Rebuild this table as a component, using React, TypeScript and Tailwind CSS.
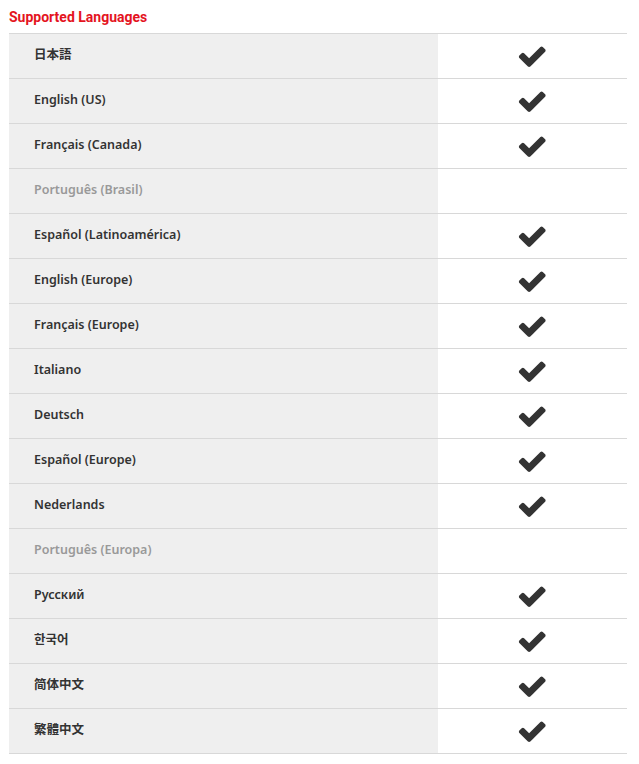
const languages: { name: string; supported: boolean }[] = [
  { name: "日本語", supported: true },
  { name: "English (US)", supported: true },
  { name: "Français (Canada)", supported: true },
  { name: "Português (Brasil)", supported: false },
  { name: "Español (Latinoamérica)", supported: true },
  { name: "English (Europe)", supported: true },
  { name: "Français (Europe)", supported: true },
  { name: "Italiano", supported: true },
  { name: "Deutsch", supported: true },
  { name: "Español (Europe)", supported: true },
  { name: "Nederlands", supported: true },
  { name: "Português (Europa)", supported: false },
  { name: "Русский", supported: true },
  { name: "한국어", supported: true },
  { name: "简体中文", supported: true },
  { name: "繁體中文", supported: true },
];

function Check() {
  return (
    <svg viewBox="93 245 1578 1277" className="h-[22px] w-[28px] fill-[#333]">
      <path d="M1671 566q0 40-28 68l-724 724-136 136q-28 28-68 28t-68-28l-136-136-362-362q-28-28-28-68t28-68l136-136q28-28 68-28t68 28l294 295 656-657q28-28 68-28t68 28l136 136q28 28 28 68z" />
    </svg>
  );
}

export default function App() {
  return (
    <div className="bg-white px-[9px] pt-[8px] pb-[10px] w-[639px]">
      <h2 className="text-[14px] font-bold text-[#e4141e] leading-[18px] mb-[7px] font-['Roboto',sans-serif]">
        Supported Languages
      </h2>
      <div className="border-t border-[#d8d8d8] w-[618px]">
        {languages.map((lang) => (
          <div
            key={lang.name}
            className="flex h-[45px] border-b border-[#d8d8d8]"
          >
            <div
              className={`w-[429px] bg-[#efefef] flex items-center pl-[25px] pb-[2px] text-[12.5px] font-semibold font-['Noto_Sans','Noto_Sans_CJK_JP',sans-serif] ${
                lang.supported ? "text-[#333]" : "text-[#999]"
              }`}
            >
              {lang.name}
            </div>
            <div className="flex-1 flex items-center justify-center pr-[2px]">
              {lang.supported && <Check />}
            </div>
          </div>
        ))}
      </div>
    </div>
  );
}
